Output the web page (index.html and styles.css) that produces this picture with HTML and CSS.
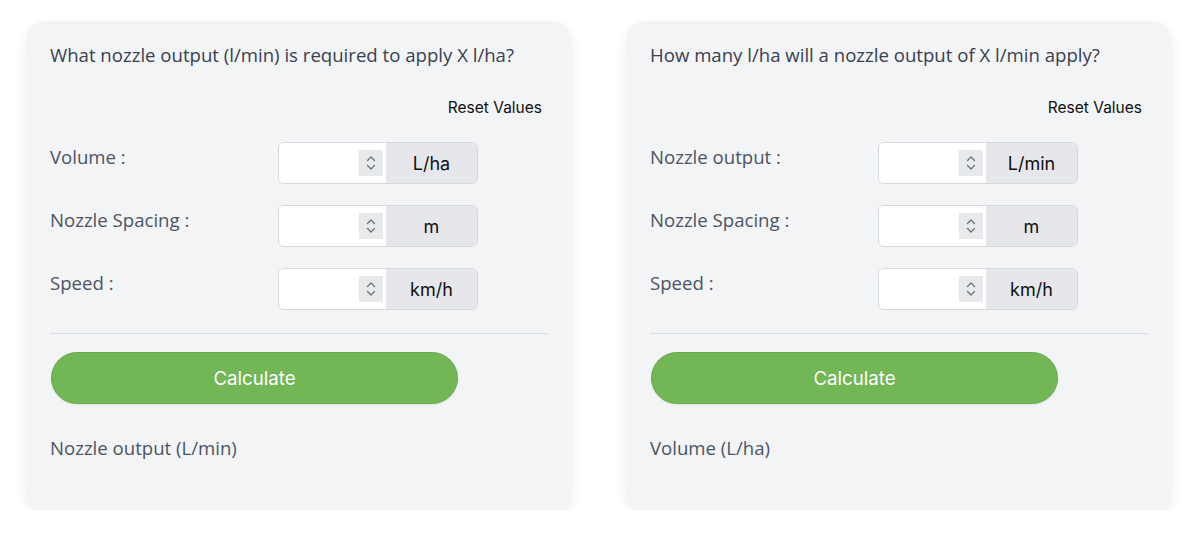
FILE: index.html
```html
<!DOCTYPE html>
<html>
<head>
<meta charset="utf-8">
<link rel="stylesheet" href="styles.css">
</head>
<body>
<div class="page">
  <div class="card">
    <div class="title">What nozzle output (l/min) is required to apply X l/ha?</div>
    <div class="reset-row"><span class="reset">Reset Values</span></div>
    <div class="rows">
      <div class="row">
        <div class="label">Volume :</div>
        <div class="group">
          <div class="field"><span class="spin"><svg width="12" height="18" viewBox="0 0 12 18"><path d="M2.5 6.5 L6 3 L9.5 6.5 M2.5 11.5 L6 15 L9.5 11.5" fill="none" stroke="#6b7280" stroke-width="1.3" stroke-linecap="round" stroke-linejoin="round"/></svg></span></div>
          <div class="addon">L/ha</div>
        </div>
      </div>
      <div class="row">
        <div class="label">Nozzle Spacing :</div>
        <div class="group">
          <div class="field"><span class="spin"><svg width="12" height="18" viewBox="0 0 12 18"><path d="M2.5 6.5 L6 3 L9.5 6.5 M2.5 11.5 L6 15 L9.5 11.5" fill="none" stroke="#6b7280" stroke-width="1.3" stroke-linecap="round" stroke-linejoin="round"/></svg></span></div>
          <div class="addon">m</div>
        </div>
      </div>
      <div class="row">
        <div class="label">Speed :</div>
        <div class="group">
          <div class="field"><span class="spin"><svg width="12" height="18" viewBox="0 0 12 18"><path d="M2.5 6.5 L6 3 L9.5 6.5 M2.5 11.5 L6 15 L9.5 11.5" fill="none" stroke="#6b7280" stroke-width="1.3" stroke-linecap="round" stroke-linejoin="round"/></svg></span></div>
          <div class="addon">km/h</div>
        </div>
      </div>
    </div>
    <div class="divider"></div>
    <div class="btn">Calculate</div>
    <div class="result">Nozzle output (L/min)</div>
  </div>
  <div class="card">
    <div class="title">How many l/ha will a nozzle output of X l/min apply?</div>
    <div class="reset-row"><span class="reset">Reset Values</span></div>
    <div class="rows">
      <div class="row">
        <div class="label">Nozzle output :</div>
        <div class="group">
          <div class="field"><span class="spin"><svg width="12" height="18" viewBox="0 0 12 18"><path d="M2.5 6.5 L6 3 L9.5 6.5 M2.5 11.5 L6 15 L9.5 11.5" fill="none" stroke="#6b7280" stroke-width="1.3" stroke-linecap="round" stroke-linejoin="round"/></svg></span></div>
          <div class="addon">L/min</div>
        </div>
      </div>
      <div class="row">
        <div class="label">Nozzle Spacing :</div>
        <div class="group">
          <div class="field"><span class="spin"><svg width="12" height="18" viewBox="0 0 12 18"><path d="M2.5 6.5 L6 3 L9.5 6.5 M2.5 11.5 L6 15 L9.5 11.5" fill="none" stroke="#6b7280" stroke-width="1.3" stroke-linecap="round" stroke-linejoin="round"/></svg></span></div>
          <div class="addon">m</div>
        </div>
      </div>
      <div class="row">
        <div class="label">Speed :</div>
        <div class="group">
          <div class="field"><span class="spin"><svg width="12" height="18" viewBox="0 0 12 18"><path d="M2.5 6.5 L6 3 L9.5 6.5 M2.5 11.5 L6 15 L9.5 11.5" fill="none" stroke="#6b7280" stroke-width="1.3" stroke-linecap="round" stroke-linejoin="round"/></svg></span></div>
          <div class="addon">km/h</div>
        </div>
      </div>
    </div>
    <div class="divider"></div>
    <div class="btn">Calculate</div>
    <div class="result">Volume (L/ha)</div>
  </div>
</div>
</body>
</html>
```

FILE: styles.css
```css
html, body {
  margin: 0;
  padding: 0;
  background: #ffffff;
}
body {
  font-family: "Open Sans", "Noto Sans", sans-serif;
}
.page {
  display: flex;
  gap: 54px;
  padding: 21px 0 0 26px;
}
.card {
  box-sizing: border-box;
  width: 546px;
  height: 489px;
  background: #f3f4f6;
  border-radius: 20px;
  box-shadow: 0 5px 12px rgba(0, 0, 0, 0.08);
  padding: 20px 24px 0 24px;
  display: flex;
  flex-direction: column;
}
.title {
  font-size: 18.6px;
  line-height: 27px;
  color: #374151;
}
.reset-row {
  display: flex;
  justify-content: flex-end;
  margin-top: 30px;
  padding-right: 6px;
}
.reset {
  font-family: Inter, "Liberation Sans", sans-serif;
  font-size: 15.5px;
  line-height: 20px;
  color: #111111;
}
.rows {
  display: flex;
  flex-direction: column;
  gap: 21px;
  margin-top: 24px;
}
.row {
  display: flex;
  align-items: flex-start;
  height: 42px;
}
.label {
  width: 228px;
  font-size: 18.6px;
  line-height: 27px;
  padding-top: 1px;
  color: #4b5563;
}
.group {
  display: flex;
  width: 200px;
  height: 42px;
  box-sizing: border-box;
  border: 1px solid #d5d8dd;
  border-radius: 6px;
  overflow: hidden;
}
.field {
  width: 104px;
  background: #ffffff;
  display: flex;
  align-items: center;
  justify-content: flex-end;
  padding-right: 3px;
}
.spin {
  width: 24px;
  height: 26px;
  background: #e8e9eb;
  display: flex;
  align-items: center;
  justify-content: center;
}
.addon {
  flex: 1;
  background: #e5e7eb;
  display: flex;
  align-items: center;
  justify-content: center;
  font-family: Inter, "Liberation Sans", sans-serif;
  font-size: 18px;
  color: #111111;
}
.divider {
  height: 1px;
  background: #d9dce0;
  margin-top: 23px;
}
.btn {
  box-sizing: border-box;
  width: 407px;
  height: 52px;
  margin-top: 18px;
  margin-left: 1px;
  border-radius: 26px;
  background: #72b656;
  border: 1px solid #68aa4d;
  box-shadow: 0 1px 2px rgba(0, 0, 0, 0.08);
  display: flex;
  align-items: center;
  justify-content: center;
  color: #ffffff;
  font-family: Inter, "Liberation Sans", sans-serif;
  font-size: 18.7px;
}
.result {
  margin-top: 30px;
  font-size: 18.6px;
  line-height: 27px;
  color: #4b5563;
}
```
